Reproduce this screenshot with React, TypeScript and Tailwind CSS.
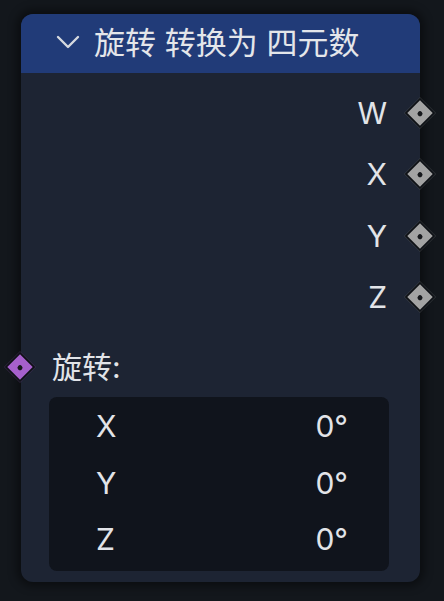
import React from "react";

const font = { fontFamily: 'Inter, "Noto Sans CJK SC", "Noto Sans", sans-serif' };

function Socket({ color }: { color: string }) {
  return (
    <span
      className="grid h-[22px] w-[22px] rotate-45 place-items-center border-2 border-[#0e1116]"
      style={{ background: color }}
    >
      <span className="h-[5px] w-[5px] rounded-full bg-[#16181c]" />
    </span>
  );
}

const outputs = ["W", "X", "Y", "Z"];
const fields = ["X", "Y", "Z"];

export default function App() {
  return (
    <div className="h-[601px] w-[444px] overflow-hidden bg-[#13171c] pl-[21px] pt-[14px]" style={font}>
      <div className="flex h-[568px] w-[399px] flex-col rounded-[12px] bg-[#1d2433] shadow-[0_0_10px_4px_rgba(0,0,0,0.45)]">
        {/* header */}
        <div className="flex h-[59px] items-center gap-[14px] rounded-t-[12px] bg-[#213b78] pl-[35px] text-[31px] leading-none text-[#e4e6ea]">
          <svg width="24" height="14" viewBox="0 0 24 14" className="mt-[-4px]">
            <polyline points="2,2 12,12 22,2" fill="none" stroke="#d6d9df" strokeWidth="2.4" strokeLinecap="round" strokeLinejoin="round" />
          </svg>
          <span className="mt-[-2px]">旋转 转换为 四元数</span>
        </div>

        {/* outputs */}
        <div className="flex flex-col pt-[9px]">
          {outputs.map((o) => (
            <div key={o} className="relative flex h-[61.5px] items-center justify-end pr-[33px] text-[30px] leading-none text-[#e2e4e8]">
              {o}
              <span className="absolute right-[-11px] top-1/2 -translate-y-1/2">
                <Socket color="#a3a3a3" />
              </span>
            </div>
          ))}
        </div>

        {/* input */}
        <div className="relative mt-[19px] flex h-[40px] items-center pl-[31px] text-[30px] leading-none text-[#e2e4e8]">
          旋转:
          <span className="absolute left-[-12px] top-1/2 -translate-y-1/2">
            <Socket color="#a660cc" />
          </span>
        </div>

        <div className="ml-[28px] mr-[31px] mt-[10px] flex flex-col rounded-[8px] bg-[#10141c] pb-[3px] pt-[1px]">
          {fields.map((f) => (
            <div key={f} className="flex h-[56.5px] items-center justify-between pl-[47px] pr-[41px] text-[30px] leading-none text-[#e2e4e8]">
              <span>{f}</span>
              <span>0°</span>
            </div>
          ))}
        </div>
      </div>
    </div>
  );
}
